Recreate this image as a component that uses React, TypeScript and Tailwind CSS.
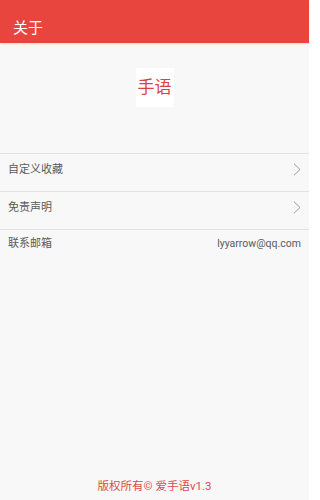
import { ReactNode } from 'react';

const font = { fontFamily: 'Roboto, "Noto Sans CJK SC", "Liberation Sans", sans-serif' };

function Chevron() {
  return (
    <svg width="8" height="13" viewBox="0 0 8 13" fill="none" className="mb-[6px] text-[#9a9a9a]">
      <path d="M1 0.8 L7 6.5 L1 12.2" stroke="currentColor" strokeWidth="1" />
    </svg>
  );
}

function Row({ label, right, height = 'h-[38px]' }: { label: string; right: ReactNode; height?: string }) {
  return (
    <div className={`flex ${height} items-center justify-between border-t border-[#e2e2e2] pl-2 pr-[8px]`}>
      <span className="pb-[5px] text-[11px] text-[#5a5a5a]">{label}</span>
      {right}
    </div>
  );
}

export default function App() {
  return (
    <div className="flex h-[500px] w-[309px] flex-col bg-[#f8f8f8]" style={font}>
      {/* Toolbar */}
      <div className="flex h-[43px] items-center bg-[#e8453f] pl-[13px] pt-[14px] shadow-[0_1px_2px_rgba(0,0,0,0.12)]">
        <span className="text-[15px] text-white">关于</span>
      </div>

      {/* Logo */}
      <div className="flex justify-center pt-[25px]">
        <div className="flex h-[39px] w-[38px] items-center justify-center bg-white">
          <span className="text-[17px] leading-none text-[#d8443e]">手语</span>
        </div>
      </div>

      {/* List */}
      <div className="mt-[46px]">
        <Row label="自定义收藏" right={<Chevron />} />
        <Row label="免责声明" right={<Chevron />} />
        <Row
          label="联系邮箱"
          height="h-[34px]"
          right={<span className="pb-[5px] text-[10.5px] text-[#5a5a5a]">lyyarrow@qq.com</span>}
        />
      </div>

      <div className="flex-1" />

      {/* Footer */}
      <div className="flex justify-center pb-[5px]">
        <span className="text-[11.5px] text-[#e0484c]">版权所有© 爱手语v1.3</span>
      </div>
    </div>
  );
}
